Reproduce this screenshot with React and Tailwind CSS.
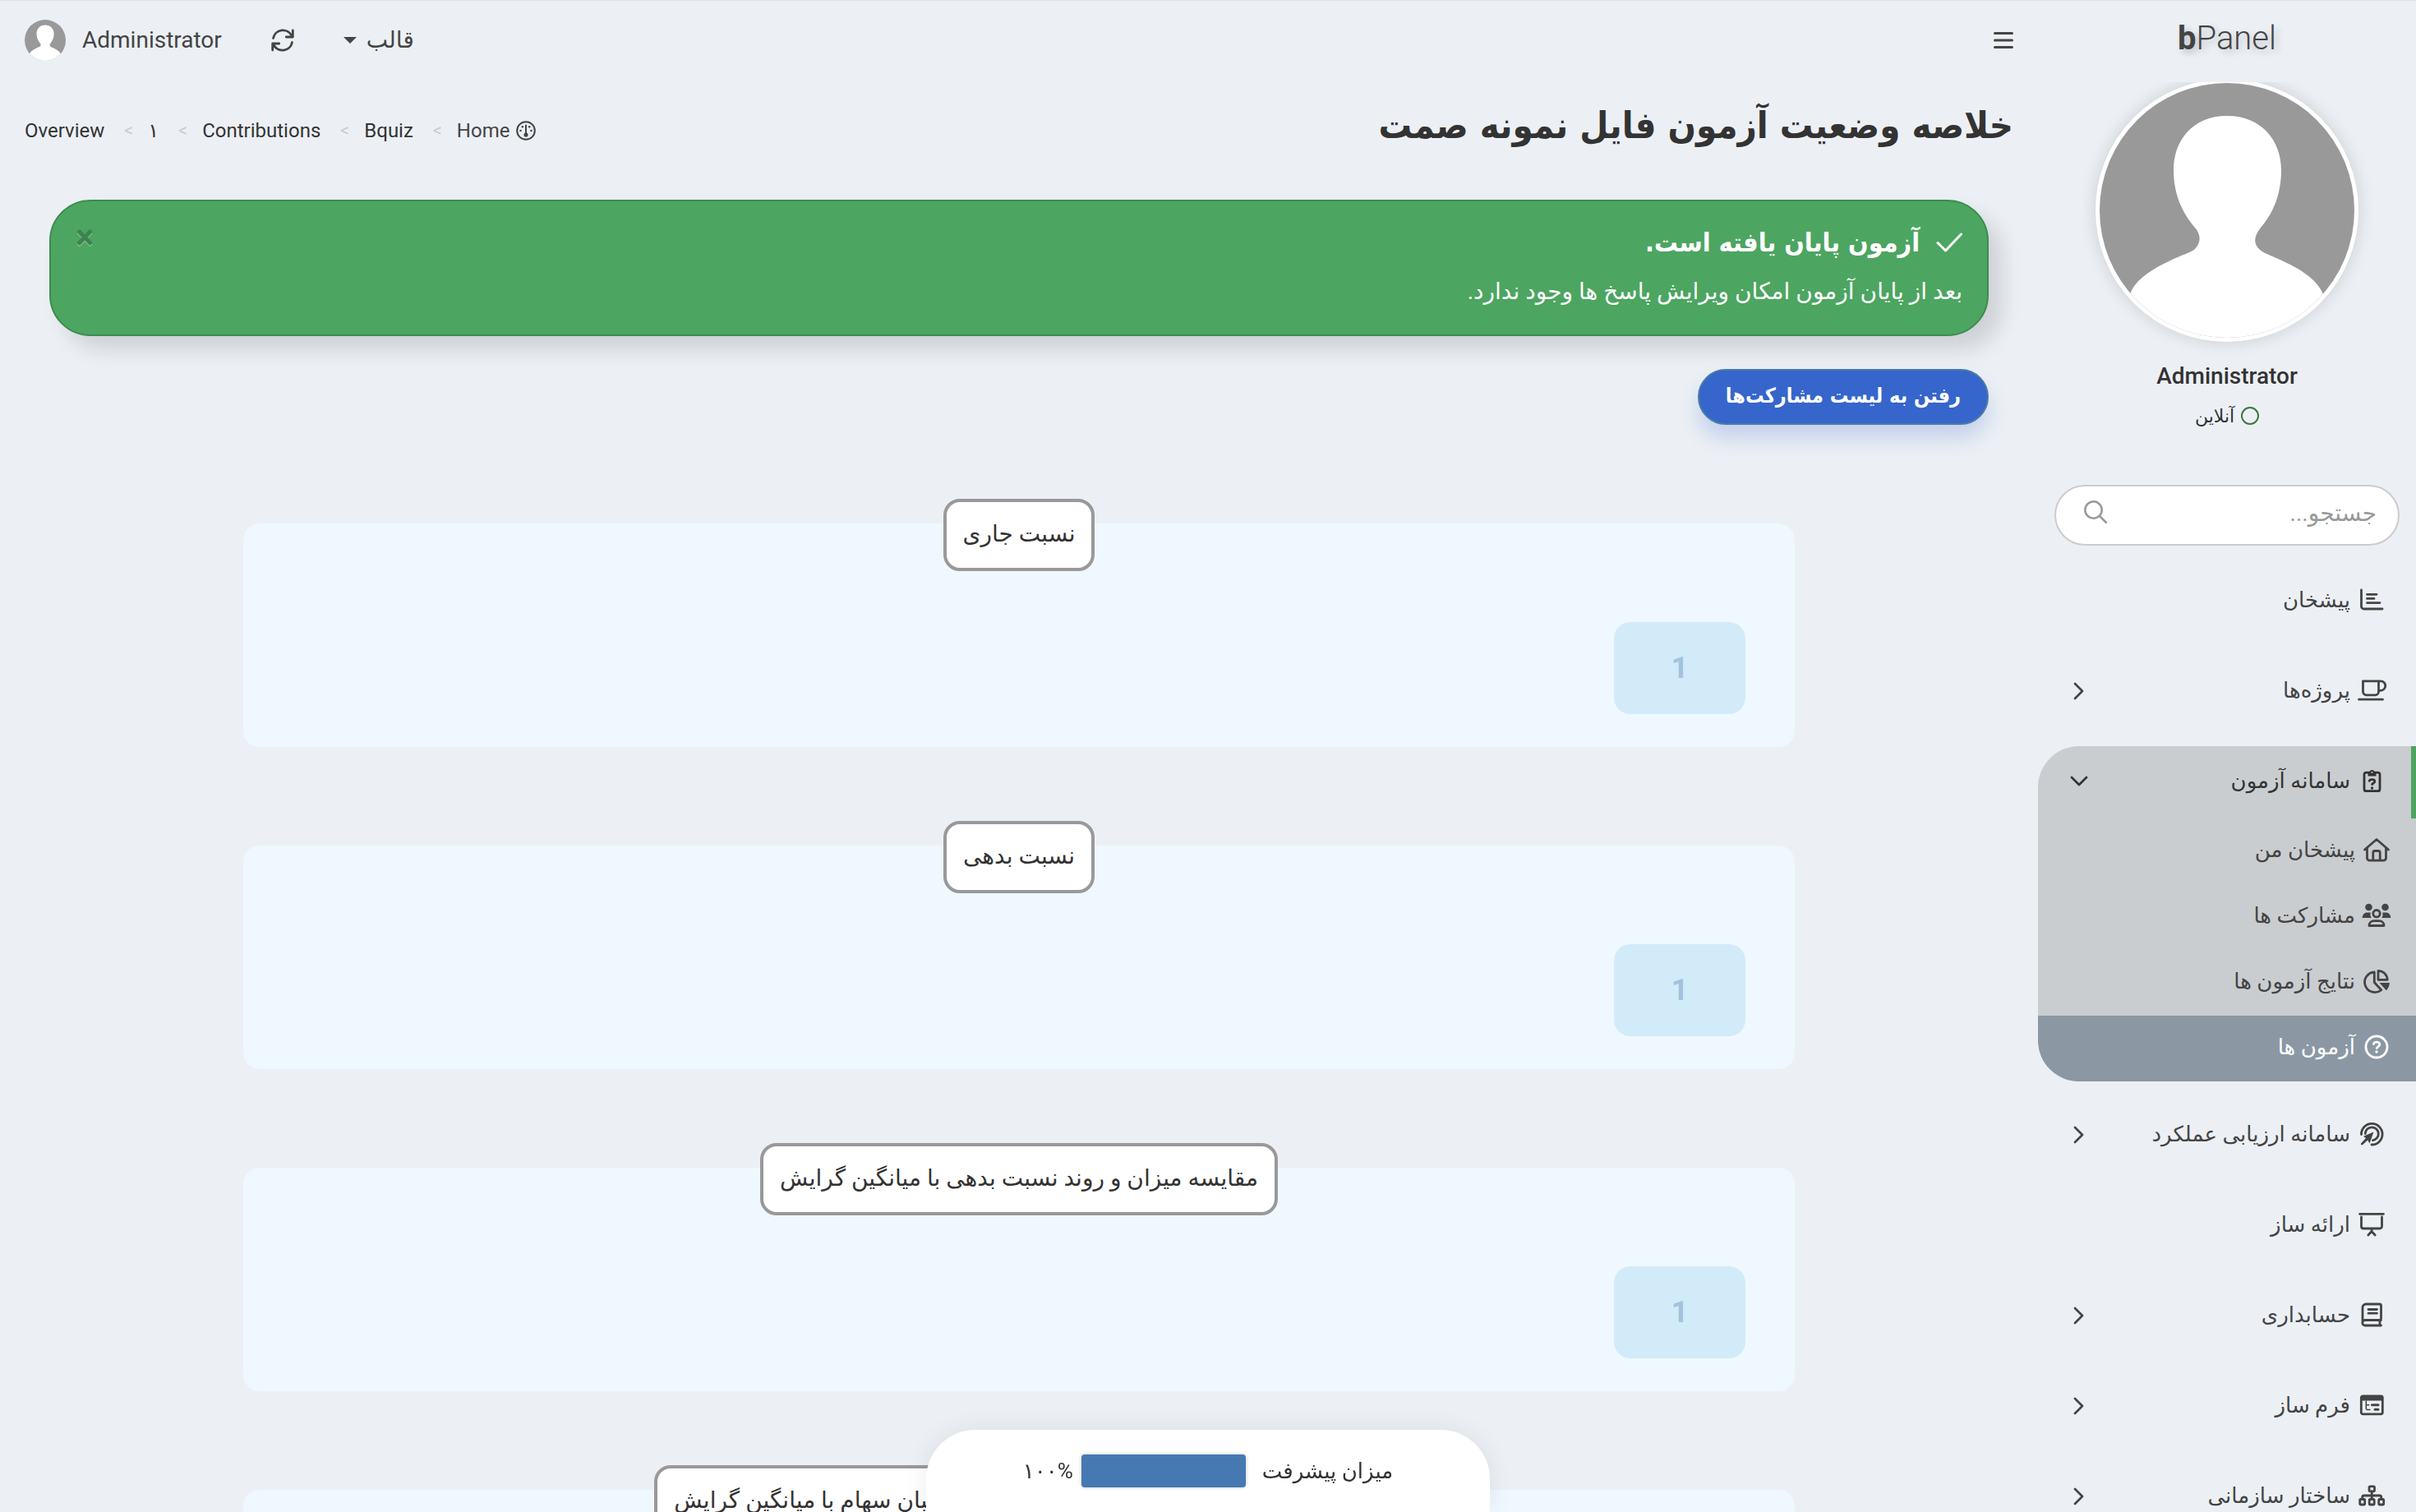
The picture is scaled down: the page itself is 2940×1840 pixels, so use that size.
import React, { useState } from "react";

// Line icons share a 32x28 box and take the colour of the text around them
const Icon = ({ children, className = "h-7 w-8" }) => (
  <svg
    viewBox="0 0 32 28"
    className={`shrink-0 overflow-visible ${className}`}
    fill="none"
    stroke="currentColor"
    strokeWidth="2.8"
    strokeLinecap="round"
    strokeLinejoin="round"
    aria-hidden="true"
  >
    {children}
  </svg>
);

const icons = {
  dashboard: (
    <Icon>
      <path d="M3.5 2v20a3 3 0 0 0 3 3H29M10.5 7.3H22M10.5 12.4H19M10.5 17.6H26" />
    </Icon>
  ),
  cup: (
    <Icon>
      <path d="M5.5 2.8h19v13a4 4 0 0 1-4 4h-11a4 4 0 0 1-4-4zM24.5 2.8H27a5.5 5.5 0 0 1 0 11.500h-2.500M.5 25.200h29" />
    </Icon>
  ),
  clipboard: (
    <Icon>
      <rect x="7" y="4.2" width="19" height="22.5" rx="2.5" />
      <path d="M11.5 8.500V4.500a1 1 0 0 1 1-1h.8a3.300 3.300 0 0 1 6.400 0h.8a1 1 0 0 1 1 1v4z" fill="currentColor" stroke="none" />
      <circle cx="16.500" cy="4" r="1" fill="#cacdd0" stroke="none" />
      <path d="M13.200 14.300c.4-2.400 6.600-2.500 6.600.6 0 1.900-2.600 2.100-3.200 3.700" />
      <circle cx="16.500" cy="23" r="1.700" fill="currentColor" stroke="none" />
    </Icon>
  ),
  house: (
    <Icon>
      <path d="M1.500 14 16 1.500 30.500 14M4.500 11.800v12.400a3 3 0 0 0 3 3h17a3 3 0 0 0 3-3V11.800M11.800 27v-9.500a2 2 0 0 1 2-2h4.400a2 2 0 0 1 2 2V27" />
    </Icon>
  ),
  users: (
    <Icon>
      <g fill="currentColor" stroke="none">
        <circle cx="6.500" cy="4" r="4.300" />
        <circle cx="26.500" cy="4" r="4.300" />
        <path d="M-1.300 17c0-4 2.500-6.600 6-6.600h4a8 8 0 0 0 1 6.600zM33.300 17c0-4-2.500-6.600-6-6.600h-4a8 8 0 0 1-1 6.600z" />
      </g>
      <circle cx="16" cy="11.700" r="4.200" />
      <path d="M7 26.500c0-3.600 2.500-5.800 6-5.800h6c3.500 0 6 2.200 6 5.800z" />
    </Icon>
  ),
  pie: (
    <Icon>
      <path d="M13.300 3v12.500l8.500 9.200A12.300 12.300 0 1 1 13.300 3z" />
      <path d="M18 1.300v11h11.200A11.300 11.300 0 0 0 18 1.300z" />
      <path d="M19.500 16h12.300c0 3.500-1.500 7-4 9.200z" fill="currentColor" stroke="none" />
    </Icon>
  ),
  question: (
    <Icon>
      <circle cx="16" cy="14" r="13" />
      <path d="M12.400 10.500c.5-3.200 7.400-3.200 7.400.5 0 2.300-3 2.500-3.600 4.600" />
      <circle cx="16" cy="20" r="1.700" fill="currentColor" stroke="none" />
    </Icon>
  ),
  target: (
    <Icon>
      <path d="M3.500 14.500A12.800 12.800 0 1 1 16 27" />
      <path d="M8.300 13.500a8 8 0 1 1 9.200 8.200" />
      <path d="M18.500 11.500 6 16.800l3 2.200-6 6.400c-.8 1.400 1 2.600 2.200 1.600l6-5.600 2.300 4z" fill="currentColor" stroke="none" />
    </Icon>
  ),
  presentation: (
    <Icon>
      <path d="M1.500 1.300h29M3.500 5v11.500a2.500 2.500 0 0 0 2.500 2.500h20a2.500 2.500 0 0 0 2.500-2.500V5M16 19.500v3M11.800 27l4.200-4.500 4.200 4.500" />
    </Icon>
  ),
  book: (
    <Icon>
      <path d="M27.500 20.500H8a3.200 3.200 0 0 0 0 6.500h19.500M5 23.500V5a4 4 0 0 1 4-4h16.500a2 2 0 0 1 2 2v15.500a2 2 0 0 1-1.500 2V27M12 7.500h10.500M12 12.200h10.500" />
    </Icon>
  ),
  form: (
    <Icon>
      <rect x="3.300" y="2.800" width="26" height="22" rx="2" />
      <path d="M3.300 3h26v5.500h-26z" fill="currentColor" stroke="none" />
      <path d="M9.300 9v9a1.500 1.500 0 0 0 1.500 1.500H14M9.300 13.700h3.500" strokeWidth="1.500" />
      <path d="M16.500 13.700H24M20 19.300h4" strokeWidth="3" />
    </Icon>
  ),
  sitemap: (
    <Icon>
      <rect x="13" y="2.800" width="6.500" height="6" rx="1.200" />
      <rect x="1.700" y="18.500" width="6" height="6.500" rx="1.200" />
      <rect x="13.200" y="18.500" width="6" height="6.500" rx="1.200" />
      <rect x="24.700" y="18.500" width="6" height="6.500" rx="1.200" />
      <path d="M16.200 9v9.500M4.700 18v-2a2 2 0 0 1 2-2h19a2 2 0 0 1 2 2v2" />
    </Icon>
  ),
};

const menu = [
  { label: "پیشخان", icon: "dashboard" },
  { label: "پروژه‌ها", icon: "cup", children: [] },
  {
    label: "سامانه آزمون",
    icon: "clipboard",
    open: true,
    children: [
      { label: "پیشخان من", icon: "house" },
      { label: "مشارکت ها", icon: "users" },
      { label: "نتایج آزمون ها", icon: "pie" },
      { label: "آزمون ها", icon: "question", active: true },
    ],
  },
  { label: "سامانه ارزیابی عملکرد", icon: "target", children: [] },
  { label: "ارائه ساز", icon: "presentation" },
  { label: "حسابداری", icon: "book", children: [] },
  { label: "فرم ساز", icon: "form", children: [] },
  { label: "ساختار سازمانی", icon: "sitemap", children: [] },
];

const questions = [
  "نسبت جاری",
  "نسبت بدهی",
  "مقایسه میزان و روند نسبت بدهی با میانگین گرایش",
  "مقایسه میزان و روند نسبت بازدهی حقوق صاحبان سهام با میانگین گرایش",
];

const crumbs = ["Bquiz", "Contributions", "۱", "Overview"];

const Avatar = ({ className }) => (
  <svg viewBox="0 0 310 310" className={`rounded-full ${className}`} role="img" aria-label="Administrator">
    <rect width="310" height="310" fill="#999" />
    <path
      fill="#fff"
      d="M155 40c-42 0-65 30-65 66 0 34 14 56 26 70 8 9 7 19 0 26-6 5-14 6-38 18-20 10-36 22-41 37L20 320h270l-18-63c-5-13-20-26-40-36-24-12-32-13-38-19-8-8-5-17 2-26 12-14 25-36 25-70 0-36-24-66-66-66z"
    />
  </svg>
);

const Chevron = ({ open }) => (
  <svg viewBox="0 0 20 20" className="size-5 overflow-visible" fill="none" stroke="currentColor" strokeWidth="2.800" strokeLinecap="round" strokeLinejoin="round" aria-hidden="true">
    <path d={open ? "M1 6l9 9 9-9" : "M5 2l9 9-9 9"} />
  </svg>
);

const MenuItem = ({ item }) => {
  const [open, setOpen] = useState(!!item.open);
  const parent = item.children !== undefined;

  return (
    <li className={open ? "overflow-hidden rounded-s-none rounded-e-[50px] bg-[#cacdd0] text-[#333]" : ""}>
      <button
        onClick={() => parent && setOpen(!open)}
        className={`flex h-[88px] w-full items-center gap-2 pb-1 pl-10 ${
          open ? "border-r-[6px] border-[#4ca561] pr-[30px]" : "pr-9"
        }`}
      >
        <span className="flex w-9 justify-center">{icons[item.icon]}</span>
        <span className="grow text-right">{item.label}</span>
        {parent && <Chevron open={open} />}
      </button>
      {open && (
        <ul>
          {item.children.map((child) => (
            <li key={child.label}>
              <a
                href="#"
                className={`flex h-20 items-center gap-2 pr-[30px] pb-1 ${
                  child.active ? "bg-[#8b98a4] text-white" : "text-[#444]"
                }`}
              >
                <span className="flex w-9 justify-center">{icons[child.icon]}</span>
                {child.label}
              </a>
            </li>
          ))}
        </ul>
      )}
    </li>
  );
};

const Sidebar = () => (
  <aside className="w-[460px] shrink-0">
    <a href="#" className="relative z-10 flex h-[99px] items-center justify-center bg-[#ecf0f5] pb-2 text-[40px] font-light text-[#444] text-shadow-[4px_4px_8px_rgba(0,0,0,0.2)]">
      <span dir="ltr"><b className="font-bold">b</b>Panel</span>
    </a>
    <div className="-mt-1 flex flex-col items-center">
      <Avatar className="size-80 border-[5px] border-white bg-white shadow-[0_0_20px_rgba(0,0,0,0.15)]" />
      <p className="mt-[22px] text-[28px] leading-10 font-medium text-[#333]">Administrator</p>
      <p className="mt-3 flex h-8 items-center gap-2 text-[22px] text-[#333]">
        <span className="size-[22px] rounded-full border-2 border-[#3c763d]" />
        آنلاین
      </p>
    </div>
    <form className="mx-5 mt-[68px] flex h-[74px] items-center rounded-full border-2 border-[#ccc] bg-white pr-[26px] pl-[34px]">
      <input
        type="text"
        aria-label="جستجو"
        placeholder="جستجو..."
        className="w-0 grow bg-transparent pb-1 text-[28px] outline-none placeholder:text-[#999]"
      />
      <button type="button" aria-label="جستجو" className="text-[#999]">
        <svg viewBox="0 0 28 28" className="mb-2 size-7" fill="none" stroke="currentColor" strokeWidth="2.500" strokeLinecap="round">
          <circle cx="11.500" cy="11.500" r="10.200" />
          <path d="m19 19 8 8" />
        </svg>
      </button>
    </form>
    <ul className="mt-6 flex flex-col gap-[22px] text-[26px] text-[#444]">
      {menu.map((item) => (
        <MenuItem key={item.label} item={item} />
      ))}
    </ul>
  </aside>
);

const TopBar = () => (
  <header className="flex h-24 items-center justify-between pr-[30px] pl-[30px] text-[28px] text-[#444]">
    <button aria-label="منو">
      <svg viewBox="0 0 24 24" className="size-6" stroke="currentColor" strokeWidth="3" strokeLinecap="round">
        <path d="M1.500 3.500h21M1.500 12h21M1.500 20.500h21" />
      </svg>
    </button>
    <nav className="flex items-center">
      <button className="flex items-center gap-3">
        قالب
        <span className="border-x-8 border-t-8 border-x-transparent border-t-[#444]" />
      </button>
      <button aria-label="بارگذاری مجدد" className="mr-[60px]">
        <svg viewBox="0 0 28 28" className="size-7" fill="none" stroke="currentColor" strokeWidth="2.800" strokeLinecap="round" strokeLinejoin="round">
          <path d="M2.500 11.500A12 12 0 0 1 25 8.500M26.300 2v8h-8M25.500 16.500A12 12 0 0 1 3 19.500M1.700 26v-8h8" />
        </svg>
      </button>
      <a href="#" className="mr-[60px] flex items-center gap-5">
        Administrator
        <Avatar className="size-[50px]" />
      </a>
    </nav>
  </header>
);

const Breadcrumb = () => (
  <ol className="flex items-center text-[24px] leading-9 text-[#333]">
    <li>
      <a href="#" className="flex items-center gap-2 text-[#444]">
        <svg viewBox="0 0 26 26" className="size-6" fill="none" stroke="currentColor" strokeWidth="2.200" strokeLinecap="round" aria-hidden="true">
          <circle cx="13" cy="13" r="11.700" />
          <path d="M13 6v11" />
          <g fill="currentColor" stroke="none">
            <circle cx="13" cy="18.500" r="2.800" />
            <circle cx="8.500" cy="7.800" r="1.400" />
            <circle cx="17.500" cy="7.800" r="1.400" />
            <circle cx="6" cy="13" r="1.400" />
            <circle cx="20" cy="13" r="1.400" />
          </g>
        </svg>
        Home
      </a>
    </li>
    {crumbs.map((crumb) => (
      <li key={crumb} className="flex items-center">
        <span className="mx-[18px] w-[17px] text-right text-[22px] text-[#ccc]">&gt;</span>
        <a href="#">{crumb}</a>
      </li>
    ))}
  </ol>
);

const Alert = ({ onClose }) => (
  <div role="alert" className="flex items-start justify-between rounded-[50px] border-2 border-[#3d8c50] bg-[#4ca561] px-[30px] pt-6 pb-[30px] text-white shadow-[16px_16px_24px_rgba(0,0,0,0.13)]">
    <div>
      <h4 className="flex items-center gap-5 font-['DejaVu_Sans_Condensed','DejaVu_Sans',sans-serif] text-[32px] leading-[52px] font-semibold">
        <svg viewBox="0 0 32 24" className="h-6 w-8" fill="none" stroke="currentColor" strokeWidth="3" strokeLinecap="round" strokeLinejoin="round" aria-hidden="true">
          <path d="m2 12.500 9.500 9.500L30.500 2" />
        </svg>
        آزمون پایان یافته است.
      </h4>
      <p className="mt-3 text-[28px] leading-11">بعد از پایان آزمون امکان ویرایش پاسخ ها وجود ندارد.</p>
    </div>
    <button onClick={onClose} aria-label="بستن" className="text-[#3d8350] text-shadow-[0_2px_0_rgba(255,255,255,0.25)]">
      <span className="block text-[42px] leading-10 font-bold">×</span>
    </button>
  </div>
);

const QuestionCard = ({ title }) => (
  <section className="flex flex-col items-center rounded-[20px] bg-[#f0f8ff] px-[60px] pb-10">
    <h3 className="-mt-[30px] flex h-[88px] items-center rounded-[20px] border-4 border-[#999] bg-white px-5 pb-0.5 text-[28px] whitespace-nowrap text-[#333]">
      {title}
    </h3>
    <button className="mt-[62px] h-28 w-40 self-start rounded-[20px] bg-[#d2ebf8] text-[36px] font-bold text-[#a3c2dd]">
      1
    </button>
  </section>
);

const App = () => {
  const [showAlert, setShowAlert] = useState(true);

  return (
    <div dir="rtl" className="flex h-screen overflow-hidden border-t border-[#dde2df] bg-[#ecf0f5] font-[Roboto,'DejaVu_Sans',sans-serif]">
      <Sidebar />
      <main className="min-w-0 grow">
        <TopBar />
        <div className="flex items-start justify-between pr-[30px] pl-[30px]">
          <h1 className="mt-5 font-['DejaVu_Sans_Condensed','DejaVu_Sans',sans-serif] text-[45px] leading-[72px] font-bold text-[#333]">
            خلاصه وضعیت آزمون فایل نمونه صمت
          </h1>
          <nav aria-label="breadcrumb" className="mt-11">
            <Breadcrumb />
          </nav>
        </div>
        <div className="mt-[54px] px-[60px]">
          {showAlert && <Alert onClose={() => setShowAlert(false)} />}
          <button className="mt-10 h-[68px] rounded-full border-2 border-[#4a7ba5] bg-[#3665cc] px-8 pb-0.5 font-['DejaVu_Sans_Condensed','DejaVu_Sans',sans-serif] text-[25px] font-bold text-white shadow-[0_16px_24px_rgba(54,101,204,0.22)]">
            رفتن به لیست مشارکت‌ها
          </button>
          <div className="mx-auto mt-[120px] flex w-4/5 flex-col gap-[120px]">
            {questions.map((title) => (
              <QuestionCard key={title} title={title} />
            ))}
          </div>
        </div>
      </main>

      {/* Progress panel, pinned to the bottom of the window */}
      <div className="fixed bottom-0 left-1/2 flex h-[100px] w-[686px] -translate-x-1/2 items-start justify-center rounded-t-[60px] bg-white pt-[30px] text-[26px] leading-10 text-[#333] shadow-[0_0_30px_rgba(0,0,0,0.08)]">
        <span id="progress-label">میزان پیشرفت</span>
        <div
          role="progressbar"
          aria-labelledby="progress-label"
          aria-valuenow={100}
          className="mr-5 ml-[10px] h-10 w-[200px] rounded-sm bg-[#4678b2] shadow-[0_0_4px_rgba(0,0,0,0.25)]"
        />
        <span>۱۰۰%</span>
      </div>
    </div>
  );
};

export default App;
